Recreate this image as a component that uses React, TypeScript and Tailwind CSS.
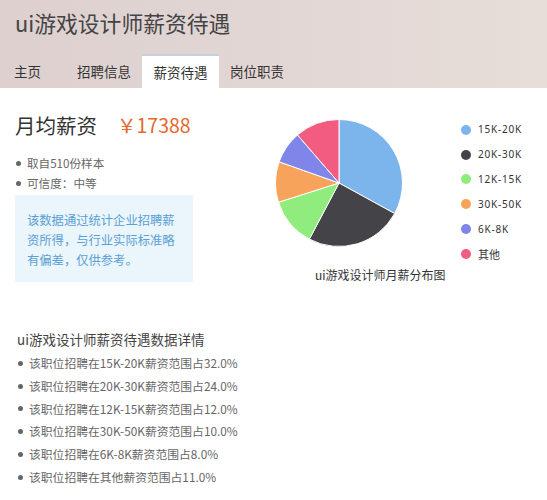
import React from 'react';

const slices = [
  { label: '15K-20K', value: 32, color: '#7cb5ec' },
  { label: '20K-30K', value: 24, color: '#434348' },
  { label: '12K-15K', value: 12, color: '#90ed7d' },
  { label: '30K-50K', value: 10, color: '#f7a35c' },
  { label: '6K-8K', value: 8, color: '#8085e9' },
  { label: '其他', value: 11, color: '#f15c80' },
];

const details = [
  '该职位招聘在15K-20K薪资范围占32.0%',
  '该职位招聘在20K-30K薪资范围占24.0%',
  '该职位招聘在12K-15K薪资范围占12.0%',
  '该职位招聘在30K-50K薪资范围占10.0%',
  '该职位招聘在6K-8K薪资范围占8.0%',
  '该职位招聘在其他薪资范围占11.0%',
];

const tabs = ['主页', '招聘信息', '薪资待遇', '岗位职责'];

// pie slice paths, starting at 12 o'clock and going clockwise
const PieChart: React.FC = () => {
  const cx = 65;
  const cy = 65;
  const r = 63.5;
  const total = slices.reduce((s, x) => s + x.value, 0);
  let start = 0;
  return (
    <svg width="130" height="130" viewBox="0 0 130 130">
      {slices.map((s) => {
        const end = start + (s.value / total) * Math.PI * 2;
        const x1 = cx + r * Math.sin(start);
        const y1 = cy - r * Math.cos(start);
        const x2 = cx + r * Math.sin(end);
        const y2 = cy - r * Math.cos(end);
        const large = end - start > Math.PI ? 1 : 0;
        const d = `M${cx},${cy} L${x1},${y1} A${r},${r} 0 ${large} 1 ${x2},${y2} Z`;
        start = end;
        return <path key={s.label} d={d} fill={s.color} stroke="#fff" strokeWidth="1" strokeLinejoin="round" />;
      })}
    </svg>
  );
};

const App: React.FC = () => {
  return (
    <div className="w-[547px] h-[500px] bg-white overflow-hidden font-['Noto_Sans_CJK_SC',sans-serif]">
      {/* Header */}
      <div className="h-[88px] flex flex-col bg-gradient-to-r from-[#ddd0cf] to-[#e7ddd9]">
        <h1 className="pl-[15px] pt-[8px] text-[21.8px] leading-[30px] text-[#444]">ui游戏设计师薪资待遇</h1>
        <div className="mt-auto flex h-[34px] items-center text-[13.5px] text-[#333]">
          {tabs.map((t, i) => (
            <div
              key={t}
              className={
                i === 0
                  ? 'pl-[14px] pr-[25px] h-full flex items-center'
                  : i === 2
                  ? 'px-[10px] w-[77px] h-full flex items-center justify-center bg-white border-t-2 border-[#c3d1db]'
                  : 'px-[11px] h-full flex items-center'
              }
            >
              {t}
            </div>
          ))}
        </div>
      </div>

      {/* Summary + chart */}
      <div className="flex pt-[23px]">
        <div className="ml-[15px] w-[178px] shrink-0">
          <div className="flex items-center h-[28px] whitespace-nowrap">
            <span className="text-[20.5px] text-[#333]">月均薪资</span>
            <span className="ml-[20px] text-[19.5px] text-[#e5682c]">￥17388</span>
          </div>
          <ul className="mt-[14px] text-[11.6px] leading-[20px] text-[#666]">
            <li className="flex items-center">
              <span className="w-[5px] h-[5px] rounded-full bg-[#666] ml-[1px] mr-[6px]" />
              取自510份样本
            </li>
            <li className="flex items-center">
              <span className="w-[5px] h-[5px] rounded-full bg-[#666] ml-[1px] mr-[6px]" />
              可信度：中等
            </li>
          </ul>
          <div className="mt-[2px] bg-[#eaf5fc] pl-[12px] pr-[10px] pt-[15px] pb-[12px] text-[12.3px] leading-[20px] text-[#5a9fd4]">
            该数据通过统计企业招聘薪资所得，与行业实际标准略有偏差，仅供参考。
          </div>
        </div>

        <div className="ml-[81px] flex">
          <div className="w-[130px] shrink-0">
            <div className="mt-[7px]">
              <PieChart />
            </div>
            <p className="mt-[19px] ml-[41px] whitespace-nowrap text-[12px] leading-[16px] text-[#333]">
              ui游戏设计师月薪分布图
            </p>
          </div>
          <ul className="ml-[57px] mt-[6.5px] font-['Noto_Sans',sans-serif] text-[10px] tracking-[0.8px] text-[#333]">
            {slices.map((s) => (
              <li key={s.label} className="flex items-center h-[24.8px]">
                <span className="w-[10px] h-[10px] rounded-full mr-[7px]" style={{ backgroundColor: s.color }} />
                <span className={s.label === '其他' ? "font-['Noto_Sans_CJK_SC',sans-serif] text-[11px] tracking-normal" : ''}>{s.label}</span>
              </li>
            ))}
          </ul>
        </div>
      </div>

      {/* Details */}
      <div className="mt-[46px] pl-[17px]">
        <h2 className="text-[13.5px] leading-[20px] text-[#444]">ui游戏设计师薪资待遇数据详情</h2>
        <ul className="mt-[3px] text-[11.8px] leading-[22.8px] text-[#666]">
          {details.map((d) => (
            <li key={d} className="flex items-center">
              <span className="w-[5px] h-[5px] rounded-full bg-[#666] ml-[1px] mr-[6px]" />
              {d}
            </li>
          ))}
        </ul>
      </div>
    </div>
  );
};

export default App;
